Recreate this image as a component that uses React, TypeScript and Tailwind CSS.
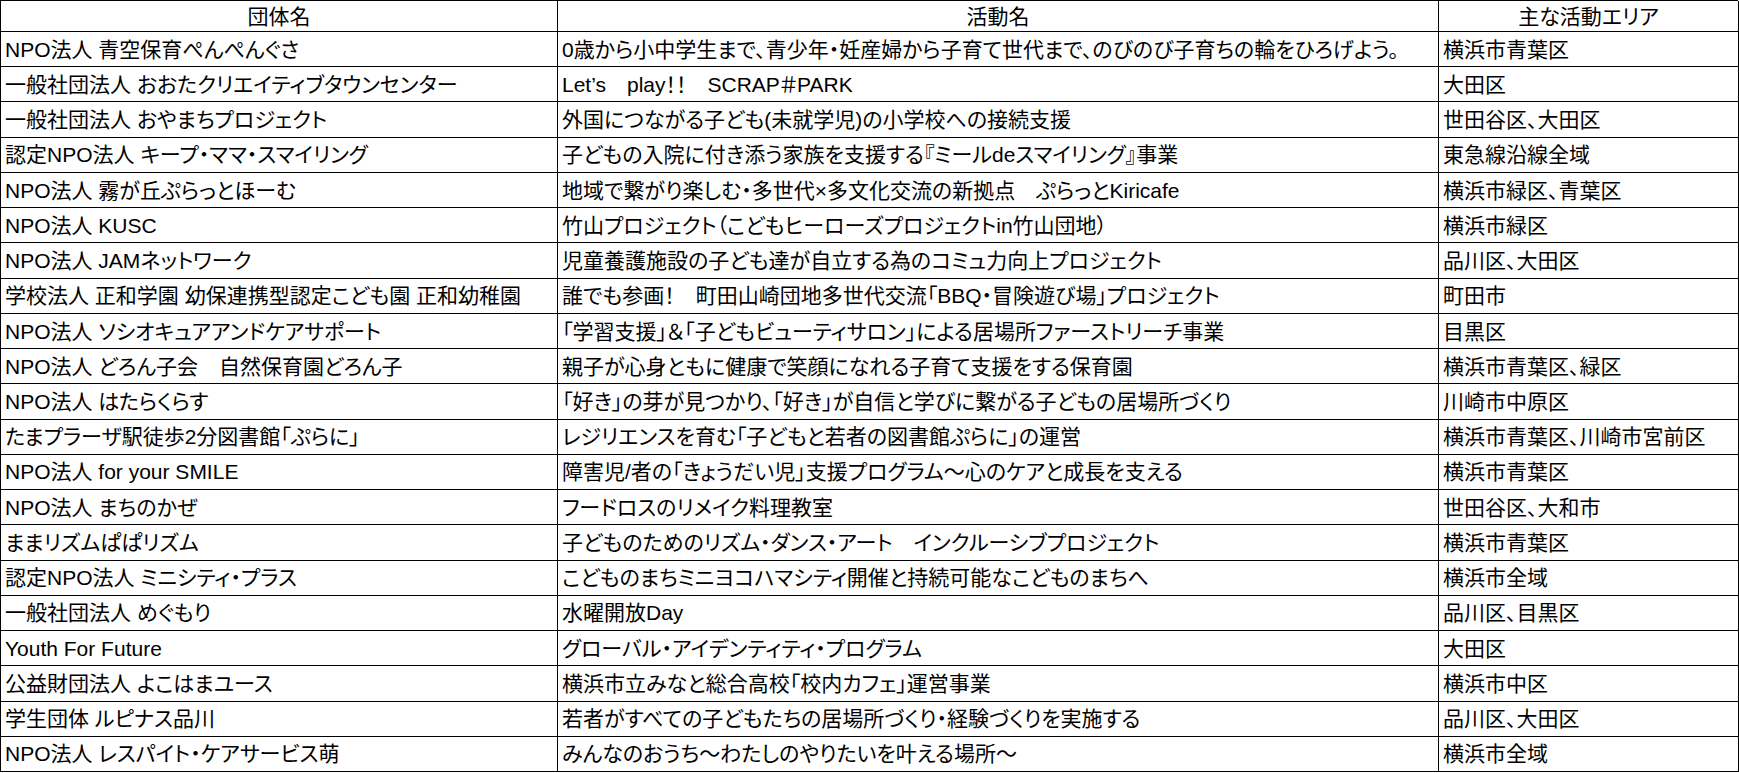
const rows: [string, string, string][] = [
  ['NPO法人 青空保育ぺんぺんぐさ', '0歳から小中学生まで、青少年・妊産婦から子育て世代まで、のびのび子育ちの輪をひろげよう。', '横浜市青葉区'],
  ['一般社団法人 おおたクリエイティブタウンセンター', 'Let’s　play！！　SCRAP＃PARK', '大田区'],
  ['一般社団法人 おやまちプロジェクト', '外国につながる子ども(未就学児)の小学校への接続支援', '世田谷区、大田区'],
  ['認定NPO法人 キープ・ママ・スマイリング', '子どもの入院に付き添う家族を支援する『ミールdeスマイリング』事業', '東急線沿線全域'],
  ['NPO法人 霧が丘ぷらっとほーむ', '地域で繋がり楽しむ・多世代×多文化交流の新拠点　ぷらっとKiricafe', '横浜市緑区、青葉区'],
  ['NPO法人 KUSC', '竹山プロジェクト（こどもヒーローズプロジェクトin竹山団地）', '横浜市緑区'],
  ['NPO法人 JAMネットワーク', '児童養護施設の子ども達が自立する為のコミュ力向上プロジェクト', '品川区、大田区'],
  ['学校法人 正和学園 幼保連携型認定こども園 正和幼稚園', '誰でも参画！　町田山崎団地多世代交流「BBQ・冒険遊び場」プロジェクト', '町田市'],
  ['NPO法人 ソシオキュアアンドケアサポート', '「学習支援」＆「子どもビューティサロン」による居場所ファーストリーチ事業', '目黒区'],
  ['NPO法人 どろん子会　自然保育園どろん子', '親子が心身ともに健康で笑顔になれる子育て支援をする保育園', '横浜市青葉区、緑区'],
  ['NPO法人 はたらくらす', '「好き」の芽が見つかり、「好き」が自信と学びに繋がる子どもの居場所づくり', '川崎市中原区'],
  ['たまプラーザ駅徒歩2分図書館「ぷらに」', 'レジリエンスを育む「子どもと若者の図書館ぷらに」の運営', '横浜市青葉区、川崎市宮前区'],
  ['NPO法人 for your SMILE', '障害児/者の「きょうだい児」支援プログラム～心のケアと成長を支える', '横浜市青葉区'],
  ['NPO法人 まちのかぜ', 'フードロスのリメイク料理教室', '世田谷区、大和市'],
  ['ままリズムぱぱリズム', '子どものためのリズム・ダンス・アート　インクルーシブプロジェクト', '横浜市青葉区'],
  ['認定NPO法人 ミニシティ・プラス', 'こどものまちミニヨコハマシティ開催と持続可能なこどものまちへ', '横浜市全域'],
  ['一般社団法人 めぐもり', '水曜開放Day', '品川区、目黒区'],
  ['Youth For Future', 'グローバル・アイデンティティ・プログラム', '大田区'],
  ['公益財団法人 よこはまユース', '横浜市立みなと総合高校「校内カフェ」運営事業', '横浜市中区'],
  ['学生団体 ルピナス品川', '若者がすべての子どもたちの居場所づくり・経験づくりを実施する', '品川区、大田区'],
  ['NPO法人 レスパイト・ケアサービス萌', 'みんなのおうち～わたしのやりたいを叶える場所～', '横浜市全域'],
]

const head = 'flex items-center justify-center border-r border-b border-black'
const cell = 'flex items-center whitespace-nowrap overflow-hidden border-r border-b border-black pl-[4px]'

export default function App() {
  return (
    <div className="min-h-[773px] w-full bg-white font-['Liberation_Sans','Noto_Sans_CJK_JP',sans-serif] text-[21px] leading-none text-black [font-feature-settings:'palt']">
      <div className="grid h-[772px] w-[1738px] grid-cols-[557px_881px_300px] grid-rows-[31px_repeat(21,minmax(0,1fr))] border-t border-l border-black">
        <div className={head}>団体名</div>
        <div className={head}>活動名</div>
        <div className={head}>主な活動エリア</div>
        {rows.map(([org, act, area]) => (
          <div key={org} className="contents">
            <div className={cell}>{org}</div>
            <div className={cell}>{act}</div>
            <div className={cell}>{area}</div>
          </div>
        ))}
      </div>
    </div>
  )
}
